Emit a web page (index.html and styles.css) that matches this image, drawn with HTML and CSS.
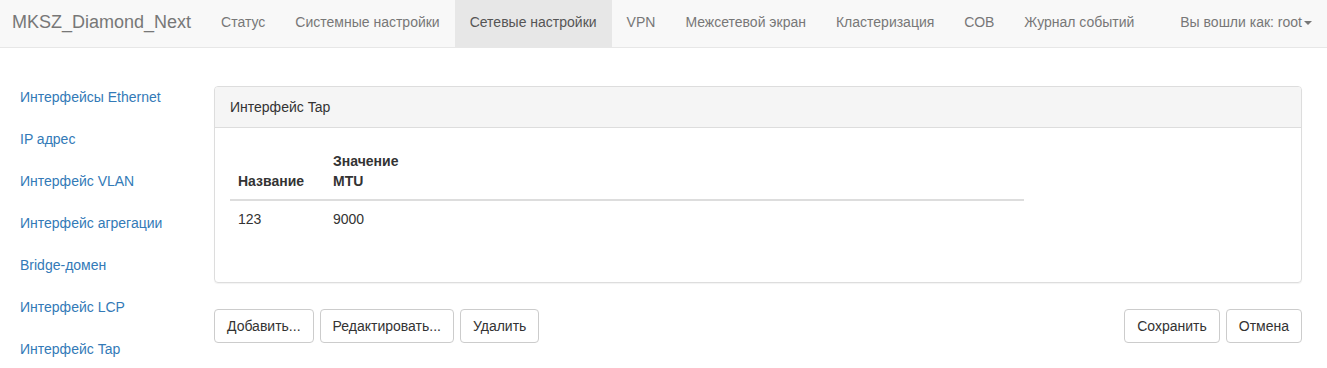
FILE: index.html
```html
<!DOCTYPE html>
<html lang="ru">
<head>
    <meta charset="UTF-8">
    <title>MKSZ_Diamond_Next - Интерфейс Tap</title>
    <link rel="stylesheet" href="styles.css">
</head>
<body>
    <!-- Верхнее меню -->
    <nav class="navbar">
        <a class="brand" href="#">MKSZ_Diamond_Next</a>
        <ul class="nav-links">
            <li><a href="#">Статус</a></li>
            <li><a href="#">Системные настройки</a></li>
            <li class="active"><a href="#">Сетевые настройки</a></li>
            <li><a href="#">VPN</a></li>
            <li><a href="#">Межсетевой экран</a></li>
            <li><a href="#">Кластеризация</a></li>
            <li><a href="#">СОВ</a></li>
            <li><a href="#">Журнал событий</a></li>
        </ul>
        <ul class="nav-links nav-right">
            <li><a href="#">Вы вошли как: root<span class="caret"></span></a></li>
        </ul>
    </nav>

    <div class="page">
        <!-- Боковое меню -->
        <ul class="side-nav">
            <li><a href="#">Интерфейсы Ethernet</a></li>
            <li><a href="#">IP адрес</a></li>
            <li><a href="#">Интерфейс VLAN</a></li>
            <li><a href="#">Интерфейс агрегации</a></li>
            <li><a href="#">Bridge-домен</a></li>
            <li><a href="#">Интерфейс LCP</a></li>
            <li><a href="#">Интерфейс Tap</a></li>
        </ul>

        <div class="content">
            <div class="panel">
                <div class="panel-heading">Интерфейс Tap</div>
                <div class="panel-body">
                    <table class="table">
                        <thead>
                            <tr>
                                <th class="col-name">Название</th>
                                <th class="col-mtu">Значение MTU</th>
                                <th></th>
                            </tr>
                        </thead>
                        <tbody>
                            <tr>
                                <td>123</td>
                                <td>9000</td>
                                <td></td>
                            </tr>
                        </tbody>
                    </table>
                </div>
            </div>

            <div class="actions">
                <div class="btn-group">
                    <button class="btn">Добавить...</button>
                    <button class="btn">Редактировать...</button>
                    <button class="btn">Удалить</button>
                </div>
                <div class="btn-group">
                    <button class="btn">Сохранить</button>
                    <button class="btn">Отмена</button>
                </div>
            </div>
        </div>
    </div>
</body>
</html>
```

FILE: styles.css
```css
* {
    box-sizing: border-box;
}
body {
    margin: 0;
    font-family: "Liberation Sans", Arial, sans-serif;
    font-size: 14px;
    line-height: 20px;
    color: #333;
    background: #fff;
}
a {
    text-decoration: none;
}
ul {
    list-style: none;
    margin: 0;
    padding: 0;
}

/* navbar */
.navbar {
    display: flex;
    height: 48px;
    background: #f8f8f8;
    border-bottom: 1px solid #e7e7e7;
}
.brand {
    padding: 12px 15px 0 12px;
    font-size: 18px;
    line-height: 20px;
    color: #777;
}
.nav-links {
    display: flex;
}
.nav-links a {
    display: block;
    height: 47px;
    padding: 12px 15px 0;
    color: #777;
}
.nav-links .active a {
    background: #e7e7e7;
    color: #555;
}
.nav-right {
    margin-left: auto;
}
.caret {
    display: inline-block;
    width: 0;
    height: 0;
    margin-left: 2px;
    vertical-align: middle;
    border-top: 4px solid #777;
    border-left: 4px solid transparent;
    border-right: 4px solid transparent;
}

/* page */
.page {
    display: flex;
    padding-top: 29px;
}
.side-nav {
    width: 214px;
    padding-left: 5px;
}
.side-nav li + li {
    margin-top: 2px;
}
.side-nav a {
    display: block;
    padding: 10px 15px;
    border-radius: 4px;
    color: #337ab7;
}
.content {
    flex: 1;
    padding: 9px 25px 0 0;
}

/* panel */
.panel {
    border: 1px solid #ddd;
    border-radius: 4px;
    box-shadow: 0 1px 1px rgba(0, 0, 0, .05);
}
.panel-heading {
    padding: 10px 15px;
    background: #f5f5f5;
    border-bottom: 1px solid #ddd;
    border-radius: 3px 3px 0 0;
}
.panel-body {
    padding: 15px 15px 25px;
}
.table {
    width: 794px;
    border-collapse: collapse;
    margin-bottom: 20px;
}
.table th,
.table td {
    padding: 8px;
    text-align: left;
    vertical-align: top;
}
.table th {
    vertical-align: bottom;
    font-weight: bold;
    border-bottom: 2px solid #ddd;
}
.table .col-name {
    width: 95px;
}
.table .col-mtu {
    width: 90px;
}

/* buttons */
.actions {
    display: flex;
    justify-content: space-between;
    margin-top: 26px;
}
.btn-group {
    display: flex;
    gap: 6px;
}
.btn {
    height: 34px;
    padding: 6px 12px;
    font-family: inherit;
    font-size: 14px;
    line-height: 20px;
    color: #333;
    background: #fff;
    border: 1px solid #ccc;
    border-radius: 4px;
}
```
